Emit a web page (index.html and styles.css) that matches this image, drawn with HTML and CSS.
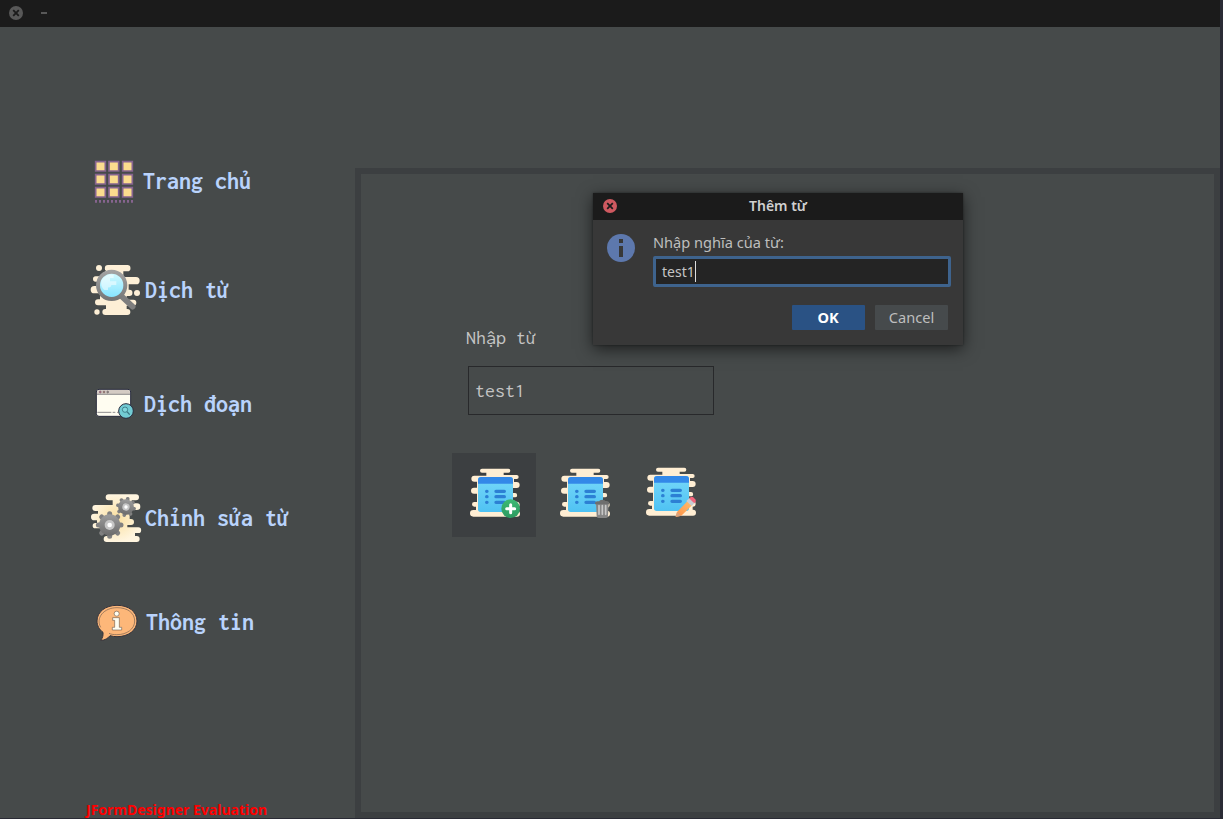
FILE: index.html
```html
<!DOCTYPE html>
<html lang="vi">
<head>
<meta charset="utf-8">
<title>Thêm từ</title>
<link rel="stylesheet" href="styles.css">
</head>
<body>
<div class="window">
  <header class="titlebar">
    <svg class="win-close" viewBox="0 0 14 14"><circle cx="7" cy="7" r="7" fill="#585858"/><path d="M4.200 4.200l5.600 5.600M9.800 4.200L4.200 9.800" stroke="#1b1b1b" stroke-width="1.8"/></svg>
    <span class="win-min"></span>
  </header>
  <div class="content">
    <aside class="sidebar">
      <nav class="nav">
        <a class="nav-item home">
          <svg class="nav-icon" viewBox="30 3 162 180">
            <g fill="#fbdc8e" stroke="#86648f" stroke-width="5">
              <path d="M47 35h29v28H47zM87 35h29v28H87zM128 35h29v28h-29zM47 74h29v28H47zM87 74h29v28H87zM128 74h29v28h-29zM47 113h29v28H47zM87 113h29v28H87zM128 113h29v28h-29z"/>
            </g>
            <path d="M45 154h114" stroke="#86648f" stroke-width="8" stroke-dasharray="6 6"/>
          </svg>
          <span class="nav-label">Trang chủ</span>
        </a>
        <a class="nav-item word">
          <svg class="nav-icon" viewBox="30 15 162 180">
            <defs>
              <linearGradient id="lens" x1="0" y1="0" x2="0" y2="1"><stop offset="0" stop-color="#d7fbff"/><stop offset="1" stop-color="#80e3ff"/></linearGradient>
              <linearGradient id="steel" x1="0" y1="0" x2="0" y2="1"><stop offset="0" stop-color="#a2a2a2"/><stop offset="1" stop-color="#777"/></linearGradient>
            </defs>
            <g fill="#fdefd6">
              <circle cx="57" cy="39" r="9"/><circle cx="51" cy="171" r="8"/><circle cx="171" cy="114" r="9"/>
              <path d="M84 30h58a9 9 0 010 19h-12v17h38a11 11 0 010 22h-22v16h2a9 9 0 010 19h-8v11h20a9 9 0 010 18h-20v10h2a9 9 0 010 18H76a9 9 0 010-18h2v-11H54a9 9 0 010-18h6v-18H43a11 11 0 010-22h16V80H47a8 8 0 010-16h28V49h9a9 9 0 010-19z"/>
            </g>
            <path d="M125 124l33 31" stroke="#7e7e7e" stroke-width="17" stroke-linecap="round"/>
            <circle cx="95" cy="91" r="41" fill="url(#lens)" stroke="url(#steel)" stroke-width="12"/>
            <path d="M65 74c9-13 25-19 36-14v9H90v10h19v11H94c0 5-5 9-10 7v8H73c-8-8-12-19-8-31z" fill="#fff" opacity=".5"/>
          </svg>
          <span class="nav-label">Dịch từ</span>
        </a>
        <a class="nav-item passage">
          <svg class="nav-icon" viewBox="30 -3 162 180">
            <rect x="49" y="43" width="103" height="81" rx="8" fill="#fffdf1" stroke="#292c3e" stroke-width="3"/>
            <path d="M51 57v-6q0-6 6-6h87q6 0 6 6v6z" fill="#d4cbc4"/>
            <path d="M51 58h99M52 112h42M98 112h8M111 112h5" stroke="#55535b" stroke-width="2"/>
            <g fill="#ddc77b" stroke="#613f58" stroke-width="2"><circle cx="61" cy="51" r="2.6" fill="#e88a9c"/><circle cx="72" cy="51" r="2.6"/><circle cx="83" cy="51" r="2.6" fill="#a1c99b"/></g>
            <circle cx="138" cy="108" r="22" fill="#72cbd3" stroke="#292c3e" stroke-width="3"/>
            <circle cx="135" cy="104" r="8" fill="#82d8dd" stroke="#397581" stroke-width="2.5"/><path d="M141 110l8 9" stroke="#397581" stroke-width="4"/>
          </svg>
          <span class="nav-label">Dịch đoạn</span>
        </a>
        <a class="nav-item edit">
          <svg class="nav-icon" viewBox="30 9 162 180">
            <defs>
              <radialGradient id="cream"><stop offset="0" stop-color="#f9df9f"/><stop offset="1" stop-color="#fff5df"/></radialGradient>
              <linearGradient id="gear-fill" x1="0" y1="0" x2="0" y2="1"><stop offset="0" stop-color="#9d9d9d"/><stop offset="1" stop-color="#6b6b6b"/></linearGradient>
              <g id="gear">
                <path d="M0-34V34M-34 0H34M-24-24L24 24M24-24L-24 24" stroke="#808080" stroke-width="15" stroke-linecap="round"/>
                <circle r="32" fill="url(#gear-fill)"/><circle r="15" fill="#c6c6c6"/><circle r="7" fill="#fff"/>
              </g>
            </defs>
            <path d="M86 28h82a9 9 0 010 18h-13v9h16a10 10 0 010 20h-22v27h4a9 9 0 010 18h-11v7h33a8 8 0 010 17h-10v9h5a9 9 0 010 18H80a9 9 0 010-18h4v-23H46a8 8 0 010-16h5v-8H43a9 9 0 010-20h11v-8h-8a9 9 0 010-18h52V46H86a9 9 0 010-18z" fill="url(#cream)"/>
            <use href="#gear" transform="translate(138 66) rotate(12) scale(.73)"/>
            <use href="#gear" transform="translate(89 120)"/>
          </svg>
          <span class="nav-label">Chỉnh sửa từ</span>
        </a>
        <a class="nav-item info">
          <svg class="nav-icon" viewBox="30 -9 162 180">
            <path d="M111 31c35 0 60 19 60 47s-26 47-60 47c-8 0-15-1-21-3-6 8-15 14-28 14 6-7 8-15 7-24-11-8-18-20-18-34 0-27 25-47 60-47z" fill="#fdb779" stroke="#35333b" stroke-width="3"/>
            <path d="M62 97c-16-29 10-59 49-59 32 0 53 16 53 40s-23 41-54 41c-9 0-17-1-23-4" fill="none" stroke="#4b4240" stroke-width="1.500"/>
            <circle cx="110" cy="56" r="7.500" fill="#fffdf1" stroke="#4d4038" stroke-width="1.500"/>
            <path d="M98 68h20v29h7v8H97v-8h7V76h-6z" fill="#fffdf1" stroke="#4d4038" stroke-width="1.500"/>
          </svg>
          <span class="nav-label">Thông tin</span>
        </a>
      </nav>
      <div class="evaluation">JFormDesigner Evaluation</div>
    </aside>
    <main class="panel">
      <label class="field-label">Nhập từ</label>
      <div class="field">test1</div>
      <div class="actions">
        <div class="action active">
          <svg class="action-icon" viewBox="36 39 252 252">
            <defs>
              <linearGradient id="paper" x1="0" y1="0" x2="0" y2="1"><stop offset="0" stop-color="#76d8f9"/><stop offset="1" stop-color="#4fc2f3"/></linearGradient>
              <linearGradient id="add" x1="0" y1="0" x2="0" y2="1"><stop offset="0" stop-color="#3dba74"/><stop offset="1" stop-color="#2d9960"/></linearGradient>
              <linearGradient id="pencil" x1="1" y1="0" x2="0" y2="1"><stop offset="0" stop-color="#ffbd6c"/><stop offset="1" stop-color="#fc9146"/></linearGradient>
              <g id="list">
                <path d="M126 86h79a6 6 0 010 12h-14v7h39a6 6 0 010 12h-8v9h8a9 9 0 010 18h-12v15h7a6 6 0 010 13h-7v13h12a9 9 0 010 18v9h1a9 9 0 010 18H100a10 10 0 010-20h8v-10h-5a7 7 0 010-14h8v-25h-9a9 9 0 010-18h9v-18h-8a9 9 0 010-18h36v-9h-13a6 6 0 010-12z" fill="#ffeed3"/>
                <rect x="114" y="111" width="105" height="105" rx="8" fill="url(#paper)"/>
                <path d="M114 131v-11q0-9 9-9h87q9 0 9 9v11z" fill="#3388e8"/>
                <path d="M140 154h1M140 170h1M140 187h1M168 154h25M168 170h25M168 187h25" stroke="#2c80d4" stroke-width="10" stroke-linecap="round"/>
              </g>
            </defs>
            <use href="#list"/>
            <circle cx="212" cy="206" r="28" fill="url(#add)"/>
            <path d="M212 194v24M200 206h24" stroke="#fff" stroke-width="9" stroke-linecap="round"/>
          </svg>
        </div>
        <div class="action">
          <svg class="action-icon" viewBox="36 39 252 252">
            <use href="#list"/>
            <path d="M198 191h38l-2 37q0 6-6 6h-22q-6 0-6-6z" fill="#858585"/>
            <path d="M195 193v-3q0-6 7-6h6q0-5 9-5t9 5h5q7 0 7 6v3z" fill="#6e6e6e"/>
            <path d="M207 197v26M217 197v26M227 197v26" stroke="#c8c8c8" stroke-width="5" stroke-linecap="round"/>
          </svg>
        </div>
        <div class="action change">
          <svg class="action-icon" viewBox="36 39 252 252">
            <use href="#list"/>
            <path d="M183 219l32-33 13 13-32 31-17 4z" fill="url(#pencil)"/>
            <path d="M183 219l13 11-17 4z" fill="#d9a17c"/>
            <path d="M211 186l10-10 16 15-10 10z" fill="#c9ccd2"/>
            <path d="M219 178q8-8 13-3l7 7q3 5-4 11z" fill="#f2647b"/>
          </svg>
        </div>
      </div>
    </main>
  </div>
</div>

<section class="dialog">
  <header class="dialog-title">
    <svg class="dialog-close" viewBox="0 0 14 14"><circle cx="7" cy="7" r="7" fill="#cf5960"/><path d="M4.200 4.200l5.600 5.600M9.800 4.200L4.200 9.800" stroke="#1b1b1b" stroke-width="1.7"/></svg>
    <span class="dialog-caption">Thêm từ</span>
  </header>
  <div class="dialog-body">
    <svg class="dialog-icon" viewBox="0 0 28 28"><circle cx="14" cy="14" r="14" fill="#5d78ad"/><path d="M12 5h4v4h-4zM12 12h4v11h-4z" fill="#383838"/></svg>
    <div class="dialog-form">
      <label class="dialog-label">Nhập nghĩa của từ:</label>
      <div class="dialog-input">test1<span class="caret"></span></div>
      <div class="dialog-buttons">
        <button class="btn primary">OK</button>
        <button class="btn">Cancel</button>
      </div>
    </div>
  </div>
</section>
</body>
</html>
```
FILE: styles.css
```css
* { box-sizing: border-box; }
body {
  margin: 0;
  width: 1223px;
  height: 819px;
  overflow: hidden;
  background: #2a2b35;
  font-family: "Noto Sans", sans-serif;
}
.window {
  display: flex;
  flex-direction: column;
  width: 1220px;
  height: 818px;
  background: #464a4a;
}
.titlebar {
  display: flex;
  align-items: center;
  gap: 18px;
  height: 27px;
  padding: 0 9px 1px;
  background: #1b1b1b;
}
.win-close { width: 14px; height: 14px; }
.win-min { width: 6px; height: 2px; background: #585858; }
.content { display: flex; flex: 1; min-height: 0; }
.sidebar {
  display: flex;
  flex-direction: column;
  width: 355px;
  padding: 124px 0 0;
  overflow: hidden;
}
.nav { display: flex; flex-direction: column; padding-left: 90px; }
.nav-item {
  display: flex;
  align-items: center;
  height: 60px;
  color: #b9d3fc;
  font: 700 24px/28px "Inconsolata", "DejaVu Sans Mono", monospace;
}
.nav-icon { width: 54px; height: 60px; flex: none; }
.nav-label { white-space: pre; }
.home .nav-label { margin-left: -1px; }
.word { margin-top: 49px; }
.word .nav-label { margin-left: 1px; }
.passage { margin-top: 54px; }
.edit { margin-top: 54px; }
.edit .nav-label { margin-left: 1px; }
.info { margin-top: 44px; }
.info .nav-label { margin-left: 2px; }
.evaluation {
  margin-top: 149px;
  padding-left: 86px;
  color: #f00;
  font: bold 14px/18px "Noto Sans", sans-serif;
  white-space: nowrap;
}
.panel {
  display: flex;
  flex-direction: column;
  align-items: flex-start;
  width: 865px;
  margin-top: 141px;
  padding: 152px 0 0 91px;
  border: 6px solid #3c3f41;
}
.field-label {
  margin-left: 14px;
  color: #c4c4c4;
  font: 20px/24px "Inconsolata", "DejaVu Sans Mono", monospace;
}
.field {
  width: 246px;
  height: 49px;
  margin: 16px 0 0 16px;
  padding-left: 6px;
  border: 1px solid #28292b;
  color: #c4c4c4;
  font: 20px/48px "Inconsolata", "DejaVu Sans Mono", monospace;
}
.actions { display: flex; align-items: flex-start; margin-top: 38px; }
.action { width: 84px; height: 84px; margin-right: 6px; }
.action.active { background: #3c3f41; }
.action.change { margin: -1px 0 0 -4px; }
.action-icon { display: block; width: 84px; height: 84px; }

.dialog {
  position: absolute;
  left: 593px;
  top: 193px;
  width: 370px;
  height: 152px;
  background: #383838;
  box-shadow: 0 4px 15px rgba(0, 0, 0, 0.6), 0 0 2px rgba(0, 0, 0, 0.4);
}
.dialog-title {
  display: flex;
  align-items: center;
  height: 27px;
  padding: 0 10px 1px;
  background: #1b1b1b;
  color: #d0d0d0;
}
.dialog-close { width: 14px; height: 14px; }
.dialog-caption {
  flex: 1;
  padding-right: 14px;
  text-align: center;
  font-size: 14px;
  line-height: 20px;
  font-weight: 600;
}
.dialog-body { display: flex; padding: 12px 12px 0 14px; }
.dialog-icon { width: 28px; height: 28px; margin: 2px 18px 0 0; }
.dialog-form { flex: 1; }
.dialog-label {
  display: block;
  height: 24px;
  color: #bebebe;
  font-size: 14.6px;
  line-height: 20px;
}
.dialog-input {
  display: flex;
  align-items: center;
  width: 298px;
  height: 31px;
  padding-left: 6px;
  border: 3px solid #3e638d;
  border-radius: 2px;
  background: #242424;
  color: #c4c4c4;
  font-size: 14px;
}
.caret { width: 1px; height: 21px; background: #ddd; }
.dialog-buttons {
  display: flex;
  justify-content: flex-end;
  gap: 10px;
  padding: 18px 3px 0 0;
}
.btn {
  width: 73px;
  height: 25px;
  padding: 0;
  border: 0;
  border-radius: 1px;
  background: #464a4c;
  color: #bebebe;
  font: 14.6px/25px "Noto Sans", sans-serif;
}
.btn.primary { padding-right: 1px; background: #2a5284; color: #fff; font-weight: bold; }
```
